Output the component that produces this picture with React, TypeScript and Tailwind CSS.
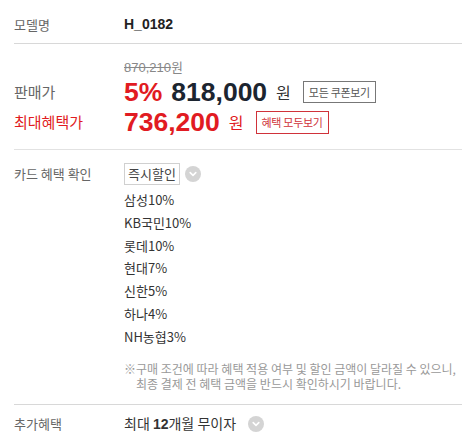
import React from "react";

const KR = { fontFamily: '"Noto Sans CJK KR", "Noto Sans", sans-serif' };
const NUM = { fontFamily: '"Liberation Sans", Arial, "Noto Sans CJK KR", sans-serif' };

function Chevron({ className }: { className?: string }) {
  return (
    <span className={"inline-flex items-center justify-center rounded-full bg-[#d4d4d4] w-[16px] h-[16px] " + (className ?? "")}>
      <svg width="10" height="10" viewBox="0 0 10 10">
        <path d="M2.2 3.6 L5 6.3 L7.8 3.6" fill="none" stroke="#ffffff" strokeWidth="1.6" strokeLinecap="round" strokeLinejoin="round" />
      </svg>
    </span>
  );
}

const cards = ["삼성10%", "KB국민10%", "롯데10%", "현대7%", "신한5%", "하나4%", "NH농협3%"];

export default function App() {
  return (
    <div className="w-[468px] h-[438px] bg-white pl-[14px] pr-[6px] text-[13px] text-[#333]" style={KR}>
      {/* 모델명 */}
      <div className="flex items-center h-[44px] pt-[6px] border-b border-[#d8d8d8]">
        <div className="w-[110px] text-[#666]">모델명</div>
        <div className="text-[14px] font-bold text-[#222]" style={NUM}>H_0182</div>
      </div>

      {/* 가격 */}
      <div className="pt-[14px] pb-[12px] border-b border-[#e2e2e2]">
        <div className="pl-[110px] leading-[18px] text-[13px] text-[#888]">
          <span className="line-through" style={NUM}>870,210</span>원
        </div>
        <div className="flex items-center h-[30px]">
          <div className="w-[110px] text-[15px] text-[#666]">판매가</div>
          <span className="text-[26.5px] font-bold text-[#e11b22] leading-none" style={NUM}>5%</span>
          <span className="ml-[9px] text-[26.5px] font-bold text-[#1c2530] leading-none" style={NUM}>818,000</span>
          <span className="ml-[9px] text-[16px] text-[#333]">원</span>
          <span className="ml-[12px] h-[22px] px-[5px] border border-[#777] text-[11px] tracking-[-0.3px] text-[#555] flex items-center">모든 쿠폰보기</span>
        </div>
        <div className="flex items-center h-[30px]">
          <div className="w-[110px] text-[15px] text-[#e11b22]">최대혜택가</div>
          <span className="text-[26.5px] font-bold text-[#e11b22] leading-none" style={NUM}>736,200</span>
          <span className="ml-[9px] text-[16px] text-[#e11b22]">원</span>
          <span className="ml-[12px] h-[23px] px-[5px] border border-[#d0323a] text-[11px] tracking-[-0.3px] text-[#d0323a] flex items-center">혜택 모두보기</span>
        </div>
      </div>

      {/* 카드 혜택 */}
      <div className="flex pt-[13px] pb-[12px] border-b border-[#d8d8d8]">
        <div className="w-[110px] leading-[22px] text-[#666]">카드 혜택 확인</div>
        <div className="flex-1">
          <div className="flex items-center gap-[5px]">
            <span className="h-[22px] px-[3px] border border-[#d0d0d0] text-[13px] text-[#444] flex items-center">즉시할인</span>
            <Chevron />
          </div>
          <div className="mt-[4px]">
            {cards.map((c) => (
              <div key={c} className="leading-[22.8px] text-[13px] text-[#333]">{c}</div>
            ))}
          </div>
          <div className="flex mt-[12px] text-[12px] leading-[15.5px] text-[#999]">
            <span className="w-[12px] shrink-0">※</span>
            <div>
              구매 조건에 따라 혜택 적용 여부 및 할인 금액이 달라질 수 있으니,
              <br />
              최종 결제 전 혜택 금액을 반드시 확인하시기 바랍니다.
            </div>
          </div>
        </div>
      </div>

      {/* 추가혜택 */}
      <div className="flex items-center h-[38px]">
        <div className="w-[110px] text-[#666]">추가혜택</div>
        <div className="text-[14px] text-[#333]">
          최대 <span className="font-bold" style={NUM}>12</span>개월 무이자
        </div>
        <Chevron className="ml-[12px]" />
      </div>
    </div>
  );
}
